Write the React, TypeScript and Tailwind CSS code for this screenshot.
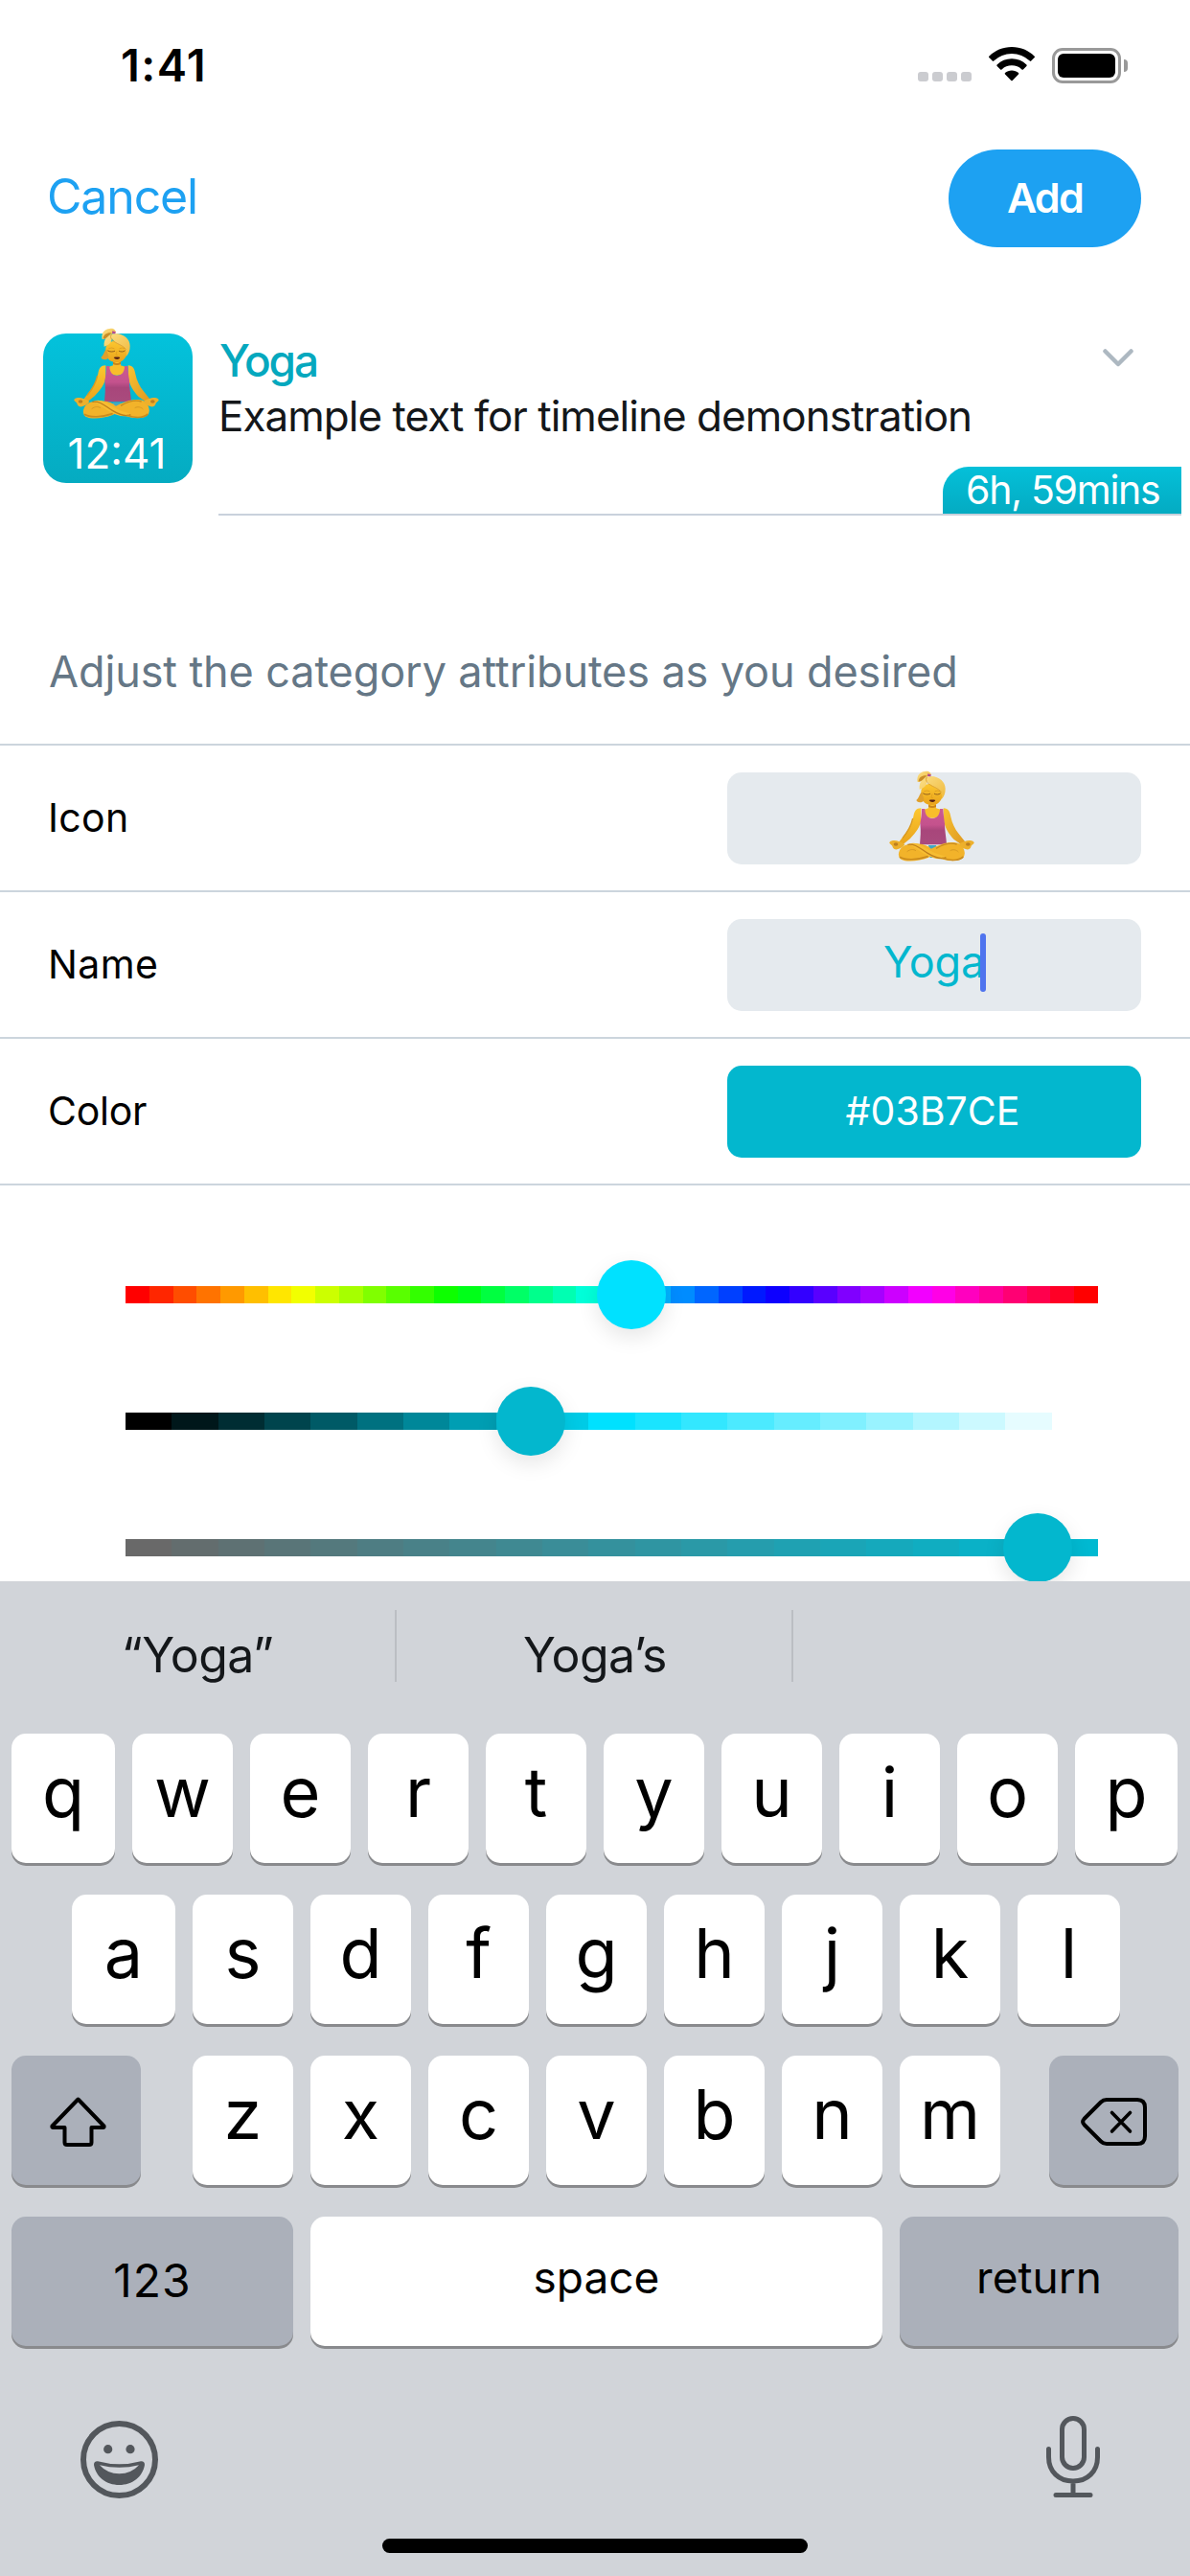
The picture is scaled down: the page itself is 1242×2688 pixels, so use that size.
import type { ReactNode } from "react";
import clsx from "clsx";

const hueStops = Array.from({ length: 41 }, (_, i) => `hsl(${i * 9} 100% 50%)`);
const lightnessStops = Array.from({ length: 21 }, (_, i) => `hsl(187 100% ${i * 5}%)`);
const saturationStops = Array.from({ length: 21 }, (_, i) => `hsl(187 ${i * 5}% 41%)`);

function Yogi({ className }: { className?: string }) {
  return (
    <svg viewBox="84 72 267 285" className={clsx("h-[95px] w-[89px] shrink-0", className)}>
      <defs>
        <linearGradient id="skin" x1="0" y1="0" x2="0" y2="1">
          <stop offset="0" stopColor="#fcc72f" />
          <stop offset="1" stopColor="#e9a31c" />
        </linearGradient>
        <linearGradient id="limb" x1="0" y1="0" x2="1" y2="1">
          <stop offset="0" stopColor="#f9c332" />
          <stop offset="1" stopColor="#dd9720" />
        </linearGradient>
        <linearGradient id="top" x1="0" y1="0" x2="0" y2="1">
          <stop offset="0" stopColor="#cc5a92" />
          <stop offset="0.45" stopColor="#c4528d" />
          <stop offset="0.6" stopColor="#a8467b" />
          <stop offset="1" stopColor="#a94b7d" />
        </linearGradient>
        <linearGradient id="hair" x1="0" y1="0" x2="1" y2="1">
          <stop offset="0" stopColor="#fbe08a" />
          <stop offset="1" stopColor="#f0b93a" />
        </linearGradient>
      </defs>
      {/* arms */}
      <path d="M184 190C168 190 163 200 160 216C157 234 148 252 136 268L114 297L124 306L150 285C168 266 182 248 184 226Z" fill="url(#skin)" />
      <path d="M254 190C270 190 274 201 277 217C281 237 290 256 302 270L324 298L314 307L287 288C270 270 258 250 255 228Z" fill="url(#limb)" />
      <path d="M158 222C154 242 142 264 126 284" stroke="#d99a22" strokeWidth="4" fill="none" />
      {/* neck */}
      <path d="M207 170H231V190L250 196C248 214 236 221 219 221C202 221 192 213 190 196L207 190Z" fill="#f8bd2b" />
      <path d="M207 178C214 185 225 185 231 178V186C224 190 214 190 207 186Z" fill="#c9861b" />
      {/* top */}
      <path d="M186 192H196C196 212 206 222 219 222C233 222 243 212 243 192H253C254 210 256 224 258 238C258 262 263 282 264 304H180C182 280 184 262 181 238C184 222 186 210 186 192Z" fill="url(#top)" />
      {/* face and hair */}
      <path d="M184 136C183 158 190 173 204 178C210 181 226 181 233 177C247 170 254 154 253 130C248 108 189 104 184 136Z" fill="url(#skin)" />
      <path d="M183 142C176 154 176 160 169 165C173 173 184 174 192 167C196 160 187 150 188 140Z" fill="#dfa02c" />
      <path d="M179 131C176 105 194 90 215 90C242 91 260 108 260 129C260 144 256 154 248 162C251 150 248 139 238 132C224 124 210 116 203 105C203 118 194 127 179 131Z" fill="url(#hair)" />
      <path d="M203 91C198 98 199 104 204 110C216 123 235 124 248 140" stroke="#dfa435" strokeWidth="3" fill="none" />
      <path d="M173 108C169 89 180 76 196 75C207 72 216 79 216 87C206 89 198 91 192 98C186 104 181 109 173 108Z" fill="url(#hair)" />
      <path d="M176 106C177 93 188 86 203 88L191 99C186 104 181 108 176 106Z" fill="#c98d28" />
      <path d="M205 82L215 85L214 91L204 90Z" fill="#b34c93" />
      <path d="M191 144C197 148 206 148 212 145M226 145C232 148 239 148 244 144" stroke="#92601d" strokeWidth="3" fill="none" strokeLinecap="round" />
      <path d="M193 137Q202 133 211 137M227 137Q236 133 244 137" stroke="#dc9c20" strokeWidth="2.5" fill="none" />
      <path d="M219 145L216 158H222" stroke="#e1a01d" strokeWidth="2.5" fill="none" />
      <path d="M209 165C214 163 224 163 229 165C226 173 213 173 209 165Z" fill="#541f14" />
      {/* legs */}
      <path d="M207 306H232L226 345H212Z" fill="#3fa8c4" />
      <path d="M232 309C255 298 284 293 301 300C318 309 324 329 318 341C310 356 281 358 255 351L213 338L207 322Z" fill="#f2b32a" />
      <path d="M206 310C188 298 148 297 128 309C112 320 109 341 121 350C140 360 179 355 206 345L232 330Z" fill="#f2b32a" />
      <path d="M146 302C165 293 186 305 206 319C224 331 246 338 262 341C252 351 236 351 221 345C196 336 170 318 146 302Z" fill="#f6bd32" />
      <path d="M142 304C166 300 183 318 205 331C225 343 247 351 262 344" stroke="#bf7f1c" strokeWidth="4" fill="none" />
      <path d="M231 316C250 305 277 297 296 303" stroke="#c88a20" strokeWidth="4" fill="none" />
      <path d="M117 343C135 354 172 352 206 341M250 346C276 355 302 354 316 342" stroke="#cb8c1e" strokeWidth="5" fill="none" />
      <path d="M140 326C150 318 160 318 168 323M275 323C284 318 294 320 301 327" stroke="#d89a24" strokeWidth="3" fill="none" />
      {/* hands */}
      <path d="M128 299C118 296 110 291 101 291C93 290 84 294 85 299C87 303 92 304 94 308C95 315 101 320 109 319C119 317 127 312 133 304Z" fill="#edb02c" />
      <path d="M307 299C317 296 325 291 334 291C342 290 351 294 350 299C348 303 343 304 341 308C340 315 334 320 326 319C316 317 308 312 302 304Z" fill="#edb02c" />
      <ellipse cx="105" cy="303" rx="7" ry="5" fill="#bd7f20" />
      <ellipse cx="331" cy="303" rx="7" ry="5" fill="#bd7f20" />
    </svg>
  );
}

function StatusBar() {
  return (
    <header className="flex h-[136px] shrink-0 items-center justify-between pl-[126px] pr-[65px]">
      <span className="text-[47px] font-semibold leading-[56px] tracking-[1.4px]">1:41</span>
      <div className="flex items-center">
        <div className="mr-[18px] mt-6 flex gap-1">
          {[0, 1, 2, 3].map((i) => (
            <span key={i} className="h-[10px] w-[11px] rounded-[3px] bg-[#cbccd0]" />
          ))}
        </div>
        <svg viewBox="0 0 48 36" className="mr-[18px] h-9 w-12 -translate-y-px">
          <path d="M24 0C33.3 0 41.700 3.700 47.700 9.700Q48.300 10.400 47.700 11.100L44.200 14.600Q43.500 15.200 42.800 14.600A27 27 0 0 0 5.200 14.600Q4.500 15.200 3.800 14.600L.3 11.100Q-.3 10.400 .3 9.700C6.300 3.700 14.700 0 24 0Z" />
          <path d="M24 12.300A22 22 0 0 1 39.400 18.500Q40.100 19.200 39.400 19.900L35.900 23.400Q35.200 24 34.500 23.400A15.300 15.300 0 0 0 13.500 23.400Q12.800 24 12.100 23.400L8.600 19.900Q7.900 19.200 8.600 18.500A22 22 0 0 1 24 12.300Z" />
          <path d="M24 24.500C26.700 24.500 29.200 25.500 31 27.100Q31.700 27.800 31 28.500L24.700 34.900Q24 35.500 23.300 34.900L17 28.500Q16.300 27.800 17 27.100C18.800 25.500 21.300 24.500 24 24.500Z" />
        </svg>
        <div className="h-[37px] w-[72px] rounded-[11px] border-[3px] border-[#999] p-[3px]">
          <div className="h-full rounded-[6px] bg-black" />
        </div>
        <div className="ml-[3px] h-[13px] w-1 rounded-r-full bg-[#999]" />
      </div>
    </header>
  );
}

function Preview() {
  return (
    <section className="flex h-[260px] shrink-0 gap-[27px] pl-[45px] pt-[70px]">
      <div className="flex size-[156px] flex-col items-center rounded-3xl bg-linear-to-b from-[#03c2dc] to-[#05abc1] text-white">
        <Yogi className="-mt-[6px] mr-[3px]" />
        <span className="mr-[2px] mt-[11px] text-[44px] leading-[50px]">12:41</span>
      </div>
      <div className="flex h-[190px] w-[1005px] flex-col border-b-2 border-[#c9d1dc]">
        <div className="flex h-[57px] items-center justify-between pl-px pr-[50px]">
          <h2 className="text-[46px] font-medium leading-[57px] tracking-[-2.1px] text-[#05a8be]">Yoga</h2>
          <svg viewBox="0 0 32 19" className="h-[19px] w-8 -translate-y-[3px]" fill="none" stroke="#adb8c1" strokeWidth="4.500" strokeLinecap="round" strokeLinejoin="round">
            <path d="M2.500 2.500L16 16L29.500 2.500" />
          </svg>
        </div>
        <p className="text-[44px] leading-[58px] tracking-[-0.98px] text-[#14171a]">Example text for timeline demonstration</p>
        <div className="mt-auto h-[49px] w-[249px] self-end rounded-tl-[27px] bg-linear-to-b from-[#04c0d9] to-[#04abc2] pl-6 text-[41px] leading-[49px] tracking-[-1.27px] whitespace-nowrap text-white">
          6h, 59mins
        </div>
      </div>
    </section>
  );
}

function Row({ label, tracking, children }: { label: string; tracking: string; children: ReactNode }) {
  return (
    <div className="flex h-[153px] items-center justify-between border-t-2 border-[#ccd5dd] pl-[50px] pr-[51px]">
      <span className={clsx("-mt-[2px] text-[41px] leading-[50px]", tracking)}>{label}</span>
      {children}
    </div>
  );
}

function Slider({ stops, left, thumb }: { stops: string[]; left: number; thumb: string }) {
  return (
    <div className="relative flex h-[132px] items-center">
      <div className="flex h-[18px] w-full">
        {stops.map((c, i) => (
          <span key={i} className="flex-1" style={{ backgroundColor: c }} />
        ))}
      </div>
      <div
        className={clsx("absolute top-[30px] size-[72px] rounded-full shadow-[0_8px_22px_rgba(0,0,0,0.1)]", thumb)}
        style={{ left }}
      />
    </div>
  );
}

function Key({ children, className = "w-[105px]", dark = false }: { children: ReactNode; className?: string; dark?: boolean }) {
  return (
    <div
      className={clsx(
        "flex h-[135px] shrink-0 justify-center rounded-[15px] shadow-[0_3px_0_#898a8d]",
        dark ? "bg-[#abb0ba]" : "bg-white",
        className,
      )}
    >
      {children}
    </div>
  );
}

function Letter({ char }: { char: string }) {
  return <span className="text-[72px] leading-[122px]">{char}</span>;
}

function Keyboard() {
  return (
    <section className="flex h-[1038px] shrink-0 flex-col bg-[#d1d4d9]">
      <div className="flex h-[159px] text-[50px] leading-[154px] text-[#14171a]">
        <div className="w-[412px] text-center tracking-[-0.57px]">“Yoga”</div>
        <div className="mt-[30px] h-[75px] w-[2px] bg-[#bbbec3]" />
        <div className="w-[412px] pl-[2px] text-center tracking-[-0.61px]">Yoga’s</div>
        <div className="mt-[30px] h-[75px] w-[2px] bg-[#bbbec3]" />
      </div>
      <div className="flex gap-[18px] pl-3">
        {[..."qwertyuiop"].map((c, i) => (
          <Key key={c} className={i === 0 ? "w-[108px]" : i === 9 ? "w-[107px]" : "w-[105px]"}>
            <Letter char={c} />
          </Key>
        ))}
      </div>
      <div className="mt-[33px] flex gap-[18px] pl-[75px]">
        {[..."asdfghjkl"].map((c, i) => (
          <Key key={c} className={i === 0 ? "w-[108px]" : i === 8 ? "w-[107px]" : "w-[105px]"}>
            <Letter char={c} />
          </Key>
        ))}
      </div>
      <div className="mt-[33px] flex pl-3">
        <Key dark className="w-[135px]">
          <svg viewBox="0 0 59 52" className="ml-1 mt-[43px] h-[52px] w-[59px]" fill="none" stroke="#000" strokeWidth="4" strokeLinejoin="round">
            <path d="M29.500 2.500L56.500 30.500Q57 32 55.500 32H43.500V47.500Q43.500 50 41 50H18Q15.500 50 15.500 47.500V32H3.500Q2 32 2.500 30.500Z" />
          </svg>
        </Key>
        <div className="ml-[54px] mr-[51px] flex gap-[18px]">
          {[..."zxcvbnm"].map((c) => (
            <Key key={c}>
              <Letter char={c} />
            </Key>
          ))}
        </div>
        <Key dark className="w-[135px]">
          <svg viewBox="0 0 69 50" className="mt-11 h-[50px] w-[69px]" fill="none" stroke="#000" strokeWidth="4" strokeLinecap="round" strokeLinejoin="round">
            <path d="M27 2H59Q67 2 67 10V40Q67 48 59 48H27Q23.500 48 21 45.500L3.500 28Q0.800 25 3.500 22L21 4.500Q23.500 2 27 2Z" />
            <path d="M32.500 15.500L51.500 35M51.500 15.500L32.500 35" strokeWidth="3.600" />
          </svg>
        </Key>
      </div>
      <div className="mt-[33px] flex gap-[18px] pl-3 text-[46px] leading-[126px]">
        <Key dark className="w-[294px]">
          <span className="text-[48px] leading-[133px] tracking-[1.1px]">123</span>
        </Key>
        <Key className="w-[597px]">space</Key>
        <Key dark className="w-[291px]">return</Key>
      </div>
      <div className="mt-[73px] flex h-[86px] items-end justify-between pl-[84px] pr-[94px]">
        <svg viewBox="0 0 81 81" className="h-[81px] w-[81px]" fill="#53575c">
          <circle cx="40.500" cy="40.500" r="37.500" fill="none" stroke="#53575c" strokeWidth="6" />
          <circle cx="28.700" cy="29.700" r="4.600" />
          <circle cx="52" cy="29.700" r="4.600" />
          <path
            fillRule="evenodd"
            d="M18 42.300Q40.500 48.400 63 42.300Q67 42 67 46C65 58.500 54 67 40.500 67S16 58.500 14 46Q14 42 18 42.300ZM20 46.300Q28 55.300 40.500 55.300T61 46.300Q40.500 51.300 20 46.300Z"
          />
        </svg>
        <svg viewBox="0 0 56 86" className="h-[86px] w-14" fill="none" stroke="#53575c" strokeWidth="5" strokeLinecap="round">
          <rect x="16.500" y="2.500" width="23" height="52" rx="11.500" />
          <path d="M2.500 34.500V43C2.500 58 13 68 28 68S53.500 58 53.500 43V34.500M28 68V82M10 82.500H46" />
        </svg>
      </div>
      <div className="mx-auto mt-[42px] h-[15px] w-[444px] rounded-full bg-black" />
    </section>
  );
}

export default function App() {
  return (
    <main className="flex h-[2688px] w-[1242px] flex-col overflow-hidden bg-white font-['Inter','Liberation_Sans',sans-serif] text-black">
      <StatusBar />
      <nav className="flex h-[142px] shrink-0 items-center justify-between pl-[49px] pr-[51px]">
        <button className="-mt-1 text-[50px] leading-[60px] tracking-[-1.17px] text-[#1da1f2]">Cancel</button>
        <button className="h-[102px] w-[201px] rounded-full bg-[#1da1f2] pb-[3px] text-center text-[43px] font-semibold leading-[60px] tracking-[-1.74px] text-white">
          Add
        </button>
      </nav>
      <Preview />
      <p className="flex h-[238px] shrink-0 items-end pb-[45px] pl-[51px] text-[45px] leading-[60px] tracking-[-0.11px] text-[#657786]">
        Adjust the category attributes as you desired
      </p>
      <div className="shrink-0 border-b-2 border-[#ccd5dd]">
        <Row label="Icon" tracking="tracking-[0.3px]">
          <div className="flex h-24 w-[432px] justify-center rounded-[15px] bg-[#e5eaee]">
            <Yogi className="-mt-[2px] mr-[5px]" />
          </div>
        </Row>
        <Row label="Name" tracking="tracking-[0.4px]">
          <div className="flex h-24 w-[432px] justify-center rounded-[15px] bg-[#e5eaee] text-[45px] leading-[90px] text-[#03b7ce]">
            <span className="relative tracking-[-0.2px]">
              Yoga
              <span className="absolute -right-[1px] top-[15px] h-[61px] w-[6px] rounded-full bg-[#4f74ee]" />
            </span>
          </div>
        </Row>
        <Row label="Color" tracking="tracking-[-0.26px]">
          <div className="h-24 w-[432px] rounded-[15px] bg-[#03b7ce] pr-[3px] text-center text-[41px] leading-[94px] text-white">
            #03B7CE
          </div>
        </Row>
      </div>
      <div className="h-[413px] shrink-0 overflow-hidden pl-[131px] pr-24 pt-12">
        <Slider stops={hueStops} left={492} thumb="bg-[#00e1ff]" />
        <Slider stops={lightnessStops} left={387} thumb="bg-[#03b7ce]" />
        <Slider stops={saturationStops} left={916} thumb="bg-[#03b7ce]" />
      </div>
      <Keyboard />
    </main>
  );
}
